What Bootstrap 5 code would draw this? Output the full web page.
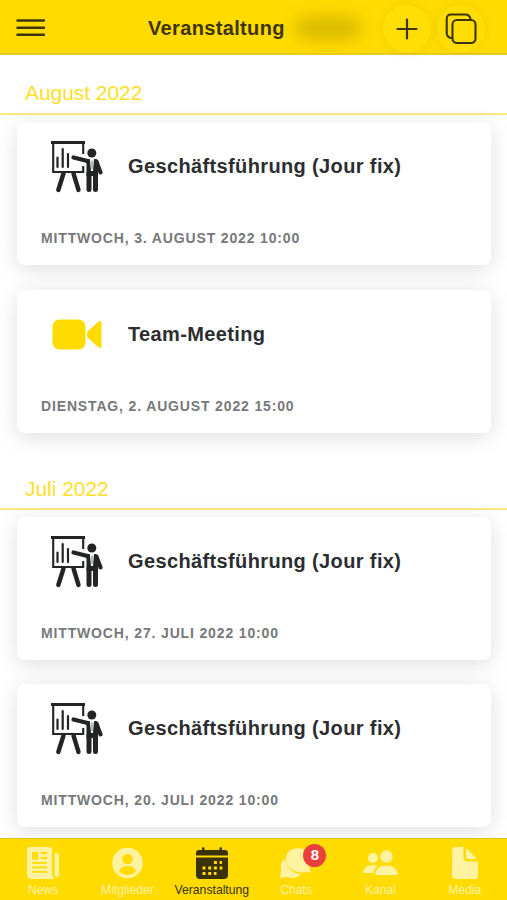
<!DOCTYPE html>
<html lang="de">
<head>
<meta charset="utf-8">
<meta name="viewport" content="width=device-width, initial-scale=1">
<title>Veranstaltung</title>
<link href="https://cdn.jsdelivr.net/npm/bootstrap@5.3.0/dist/css/bootstrap.min.css" rel="stylesheet">
<style>
  :root { --brand: #ffdb00; --ink: #2b2d30; }
  body { font-family: "Liberation Sans", Arial, sans-serif; background: #fff; color: var(--ink); }
  svg { display: block; flex: none; }
  .app { height: 900px; }
  .topbar { height: 55px; background: var(--brand); border-bottom: 2px solid #e8cb22; color: #3d3508; padding: 3px 22px 0 16px; z-index: 2; }
  .topbar .menu { width: 108px; }
  .topbar h1 { font-size: 20px; font-weight: 700; letter-spacing: .35px; line-height: 24px; width: 137px; margin-left: 24px; padding-bottom: 1px; }
  .smudge { width: 66px; height: 22px; margin-left: 10px; background: #d9b900; border-radius: 10px; filter: blur(8px); }
  .round-actions { gap: 6px; padding-top: 2px; }
  .round-btn { width: 48px; height: 48px; border-radius: 50%; background: #ffde05; box-shadow: 0 0 10px rgba(150,120,0,.12); border: 0; padding: 0; color: #3d3508; }
  .month { height: 60px; padding: 0 25px; border-bottom: 2px solid #ffe981; color: #ffdf25; font-size: 20.9px; line-height: 24px; }
  .month span { margin-bottom: 8px; }
  .month.later { margin-top: 17px; }
  .month.later span { margin-bottom: 7px; }
  .events { padding: 7px 16px 0 17px; gap: 25px; }
  .later + .events { gap: 24px; }
  .event { height: 143px; border: 0; border-radius: 8px; box-shadow: 0 4px 22px rgba(0,0,0,.13); padding: 18px 24px 0; }
  .event-top { height: 54px; padding-left: 10px; gap: 25px; }
  .event h2 { font-size: 20px; font-weight: 700; letter-spacing: .37px; line-height: 24px; color: var(--ink); padding-bottom: 3px; }
  .event time { font-size: 14px; font-weight: 700; letter-spacing: .85px; line-height: 18px; color: #77787a; margin-top: 35px; }
  .tabs { height: 62px; background: var(--brand); border-top: 1px solid #dfc21c; z-index: 2; color: #fff2a0; font-size: 12.2px; line-height: 14px; padding-left: 1px; }
  .tabs a { color: inherit; padding-top: 8px; gap: 4px; width: 84.4px; }
  .tabs a.active { color: #3a3206; }
  .count { width: 23px; height: 23px; background: #e9403c; color: #fff; font-size: 15px; line-height: 22px; left: 49.500px; top: 5px; }
</style>
<script src="https://cdn.jsdelivr.net/npm/bootstrap@5.3.0/dist/js/bootstrap.bundle.min.js"></script>
</head>
<body>
<svg width="0" height="0" class="position-absolute" aria-hidden="true">
  <symbol id="board" viewBox="0 0 52 52">
    <g fill="none" stroke="#222426" stroke-linecap="round">
      <path d="M0 1.500H34" stroke-width="3" stroke-linecap="butt"/>
      <path d="M2.200 3V31H32.200V25M32.200 3V13" stroke-width="2.100" stroke-linecap="butt"/>
      <path d="M6.500 16.500V26M11.700 8V26M17 13V26" stroke-width="2.200"/>
      <path d="M12.500 32.500L7.300 49M22.500 32.500L27.500 49" stroke-width="4.400"/>
      <path d="M22.500 16.500L36.500 20" stroke-width="4.200"/>
      <path d="M45.500 20.500L49.600 31.500" stroke-width="4"/>
      <path d="M38 32V48.500M44.500 32V48.500" stroke-width="5"/>
    </g>
    <circle cx="40.800" cy="12" r="4.500" fill="#222426"/>
    <path d="M34 18H44.500Q47.800 18.500 47.800 23L47 35H35.500V23Z" fill="#222426"/>
    <path d="M38.800 18H43L42 30H40Z" fill="#fff"/>
    <path d="M41 19.500V28" stroke="#73777a" stroke-width="1"/>
  </symbol>
</svg>
<div class="app d-flex flex-column overflow-hidden">
  <header class="topbar d-flex align-items-center flex-shrink-0 position-relative">
    <div class="menu"><svg width="30" height="20" viewBox="0 0 30 20" stroke="currentColor" stroke-width="2.400" stroke-linecap="round"><path d="M1.500 2.500H28M1.500 9.700H28M1.500 16.800H28"/></svg></div>
    <h1 class="mb-0">Veranstaltung</h1>
    <div class="smudge"></div>
    <div class="round-actions d-flex ms-auto">
      <button class="round-btn d-flex align-items-center justify-content-center" aria-label="Neu"><svg width="24" height="24" viewBox="0 0 24 24" stroke="currentColor" stroke-width="2.200" stroke-linecap="round"><path d="M12 2.500V21.500M2.500 12H21.500"/></svg></button>
      <button class="round-btn d-flex align-items-center justify-content-center" aria-label="Kopieren"><svg width="32" height="32" viewBox="0 0 32 32" fill="none" stroke="currentColor" stroke-width="2.100" stroke-linejoin="round"><rect x="7.500" y="7" width="23" height="23" rx="4.500"/><path d="M7.500 25H6Q1.700 24 1.700 20V6Q1.700 1.500 6 1.500H20.500Q24.500 1.500 25.500 6V7"/></svg></button>
    </div>
  </header>
  <main class="flex-grow-1 overflow-hidden">
    <div class="month d-flex align-items-end"><span>August 2022</span></div>
    <div class="events d-flex flex-column">
      <article class="card event">
        <div class="event-top d-flex align-items-center"><svg width="52" height="52"><use href="#board"/></svg><h2 class="mb-0">Geschäftsführung (Jour fix)</h2></div>
        <time>MITTWOCH, 3. AUGUST 2022 10:00</time>
      </article>
      <article class="card event">
        <div class="event-top d-flex align-items-center"><svg width="52" height="52" viewBox="0 0 52 52" fill="#ffdb00"><rect x="1.500" y="10.500" width="33" height="30" rx="7"/><path d="M36 23L47 13Q50.500 10.500 50.500 14.500V36.500Q50.500 40.500 47 38L36 28Z"/></svg><h2 class="mb-0">Team-Meeting</h2></div>
        <time>DIENSTAG, 2. AUGUST 2022 15:00</time>
      </article>
    </div>
    <div class="month later d-flex align-items-end"><span>Juli 2022</span></div>
    <div class="events d-flex flex-column">
      <article class="card event">
        <div class="event-top d-flex align-items-center"><svg width="52" height="52"><use href="#board"/></svg><h2 class="mb-0">Geschäftsführung (Jour fix)</h2></div>
        <time>MITTWOCH, 27. JULI 2022 10:00</time>
      </article>
      <article class="card event">
        <div class="event-top d-flex align-items-center"><svg width="52" height="52"><use href="#board"/></svg><h2 class="mb-0">Geschäftsführung (Jour fix)</h2></div>
        <time>MITTWOCH, 20. JULI 2022 10:00</time>
      </article>
    </div>
  </main>
  <nav class="tabs d-flex flex-shrink-0 position-relative">
    <a class="d-flex flex-column align-items-center text-decoration-none" href="#"><svg width="34" height="32" viewBox="0 0 34 32" fill="currentColor"><path fill-rule="evenodd" d="M4 0H23Q26 0 26 3V27Q26 30 29 32H5Q1 32 1 28V3Q1 0 4 0ZM6 5V12.500H12V5ZM14.500 5V7H21V5ZM14.500 10V12H21V10ZM6 15V16.700H21V15ZM6 19.500V21.200H21V19.500ZM6 24V25.700H21V24Z"/><path d="M28.500 6H31Q33 6 33 8V27Q33 30 30.500 30Q28.500 30 28.500 27Z"/></svg>News</a>
    <a class="d-flex flex-column align-items-center text-decoration-none" href="#"><svg width="32" height="32" viewBox="0 0 32 32"><circle cx="16.500" cy="16" r="15.300" fill="currentColor"/><circle cx="16.500" cy="12" r="5.300" fill="#ffdb00"/><path d="M8 24Q10.500 19 16.500 19T25 24Q21.500 28 16.500 28T8 24Z" fill="#ffdb00"/></svg>Mitglieder</a>
    <a class="active d-flex flex-column align-items-center text-decoration-none" href="#"><svg width="34" height="32" viewBox="0 0 34 32" fill="currentColor"><path d="M1 8.500V6Q1 3 4 3H7V1.500Q7 0 8.200 0T9.500 1.500V3H24.500V1.500Q24.500 0 25.800 0T27 1.500V3H30Q33 3 33 6V8.500Z"/><path d="M1 10.500H33V28Q33 32 29 32H5Q1 32 1 28Z"/><path d="M18.900 15.500H27M7.500 21H27.400M7.500 26.500H21.500" fill="none" stroke="#ffdb00" stroke-width="3" stroke-dasharray="3 2.700"/></svg>Veranstaltung</a>
    <a class="d-flex flex-column align-items-center text-decoration-none position-relative" href="#"><svg width="34" height="32" viewBox="0 0 34 32" fill="currentColor"><path d="M6.500 12Q1 15 2 21Q2.500 24 1 31Q6 30 8 30Q17 33 22 27Q10 27 6.500 12Z"/><path d="M19 1C6 1 3.500 14 10.500 21C16 26 23 26 26.500 25Q30 26 32 26Q30.500 23 31 20C37 10 29 1 19 1Z" stroke="#ffdf33" stroke-width=".8"/></svg>Chats<span class="count rounded-circle position-absolute text-center fw-bold">8</span></a>
    <a class="d-flex flex-column align-items-center text-decoration-none" href="#"><svg width="36" height="32" viewBox="0 0 36 32" fill="currentColor"><circle cx="11" cy="11" r="5"/><circle cx="24.500" cy="9.500" r="6.200"/><path d="M1 26Q2 18 11 18Q14 18 16 19Q12 21 11.500 26Z"/><path d="M13 28Q14 18.500 24.500 18.500T36 28Z"/></svg>Kanal</a>
    <a class="d-flex flex-column align-items-center text-decoration-none" href="#"><svg width="28" height="32" viewBox="0 0 28 32" fill="currentColor"><path d="M5 0H12.500V10Q12.500 14.500 17 14.500H27V28Q27 32 23 32H5Q1 32 1 28V4Q1 0 5 0Z"/><path d="M15 1L26 12H17Q15 12 15 10Z"/></svg>Media</a>
  </nav>
</div>
</body>
</html>
